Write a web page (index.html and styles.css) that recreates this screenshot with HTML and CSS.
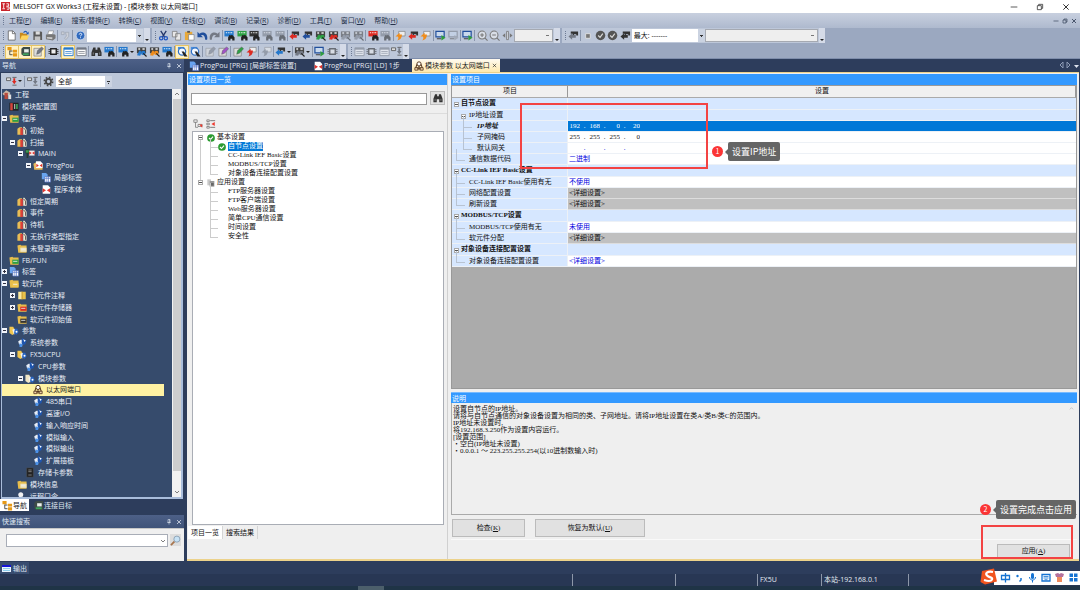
FILE: index.html
```html
<!DOCTYPE html>
<html lang="zh-CN">
<head>
<meta charset="utf-8">
<title>MELSOFT GX Works3 (工程未设置) - [模块参数 以太网端口]</title>
<link rel="stylesheet" href="styles.css">
</head>
<body>
<svg class="defs" aria-hidden="true">
  <symbol id="new" viewBox="0 0 12 12"><path d="M2.500 1h5l2.500 2.500V11H2.500z" fill="#fff" stroke="#555" stroke-width=".8"/><path d="M7 1v3h3" fill="none" stroke="#555" stroke-width=".8"/></symbol>
  <symbol id="open" viewBox="0 0 12 12"><path d="M1 3h3l1 1h4v6H1z" fill="#c98a1c"/><path d="M3 6h8l-2 4.500H1z" fill="#ffd45c"/><path d="M5 3c1-2 3-2 4 0" fill="none" stroke="#1d57b5" stroke-width="1.200"/><path d="M10.500 1.500v3h-3z" fill="#1d57b5"/></symbol>
  <symbol id="save" viewBox="0 0 12 12"><path d="M1.500 1.500H10l1 1V11H1.500z" fill="#5a5a5a"/><path d="M4 1.500h4.500V5H4z" fill="#ddd"/><path d="M3 7h6v4H3z" fill="#c4c4c4"/></symbol>
  <symbol id="print" viewBox="0 0 12 12"><path d="M4 1h5.500L8 5H3z" fill="#fff" stroke="#777" stroke-width=".6"/><path d="M1 5l9-.5 1.500 1V9l-3 2.500L1 10z" fill="#777"/><path d="M2 7.500l6 .5v2l-6-.7z" fill="#ccc"/></symbol>
  <symbol id="copyg" viewBox="0 0 12 12"><path d="M1.500 2h3v3h-3zM6 2.500h3.500V7l-3 3.500L5 9l2-2.500z" fill="#ccd0d8" stroke="#98a0ae" stroke-width=".7"/></symbol>
  <symbol id="help" viewBox="0 0 12 12"><circle cx="6" cy="6" r="4.700" fill="#2f69bd" stroke="#d7e5f8" stroke-width=".7"/><path d="M4.600 5c0-2 3-1.700 2.800-.2C7.300 5.700 6 5.800 6 7M6 8v.9" fill="none" stroke="#fff" stroke-width="1"/></symbol>
  <symbol id="cut" viewBox="0 0 12 12"><path d="M3 1l4.500 7M9 1L4.500 8" stroke="#25376a" stroke-width="1.400"/><circle cx="3.500" cy="9" r="1.800" fill="none" stroke="#2458c0" stroke-width="1.400"/><circle cx="8.500" cy="9" r="1.800" fill="none" stroke="#2458c0" stroke-width="1.400"/></symbol>
  <symbol id="copy" viewBox="0 0 12 12"><path d="M1.500 1.500h5v6h-5zM5 4h5.500v7H5z" fill="#e8e8e8" stroke="#777" stroke-width=".8"/></symbol>
  <symbol id="paste" viewBox="0 0 12 12"><path d="M1 2h8v9H1z" fill="#e8a93a"/><path d="M3.500 1h3v2h-3z" fill="#555"/><path d="M5 5h6v6H5z" fill="#fff" stroke="#777" stroke-width=".7"/></symbol>
  <symbol id="undo" viewBox="0 0 12 12"><path d="M.5 2v6h6L4.500 6c2-1.200 4 0 4.500 4.500h2C12.500 4 7 1 2.600 4z" fill="var(--a)"/></symbol>
  <symbol id="find" viewBox="0 0 12 12"><path d="M.5 1h10v6H.5z" fill="var(--a)"/><path d="M2 3h1.500M4.500 3H6M7 3h2" stroke="#fff" stroke-width="1"/><path d="M4.500 11.500V8l1.500-2.500h1l.5 1 .5-1h1L11.500 8v3.500H9V9.500H7v2z" fill="#222"/></symbol>
  <symbol id="lad" viewBox="0 0 12 12"><path d="M3 1.500h8V6H9V4.500H6.500V6H5V4H3z" fill="#333"/><path d="M.5 7l4-3.500V5.500h4v3h-4v2z" fill="var(--a)"/></symbol>
  <symbol id="ladm" viewBox="0 0 12 12"><path d="M1 1.500h10V8H1z" fill="#444"/><path d="M2.500 2.500h2V4h-2zM7 2.500h2.500V4H7z" fill="#eee"/><path d="M1 10l3-5.500 2.500 2-2 4z" fill="var(--a)"/><circle cx="8" cy="7.500" r="2.400" fill="var(--a)"/><path d="M8 8l3.500 3.500" stroke="#222" stroke-width="1.300"/></symbol>
  <symbol id="swap" viewBox="0 0 12 12"><path d="M4 1.500h7V6.500H4z" fill="#eee" stroke="#777" stroke-width=".7"/><path d="M.5 7l4.500-4v2h2.500c0 3-1 5.500-5 6.500 1.500-2 1.500-3.500.5-4.500z" fill="var(--a)"/></symbol>
  <symbol id="mon" viewBox="0 0 12 12"><path d="M1 1.500h9v6H1z" fill="#c9d9ed" stroke="var(--a)" stroke-width="1.300"/><path d="M2 9.500h5" stroke="#555" stroke-width="1.300"/><path d="M7 5.500l4.500 3L7 11.500z" fill="var(--b)"/></symbol>
  <symbol id="plus" viewBox="0 0 12 12"><circle cx="5.500" cy="5.500" r="4.300" fill="#d8dde6" stroke="#777" stroke-width="1.100"/><path d="M3.500 5.500h4M5.500 3.500v4M8.500 8.500l3 3" stroke="#777" stroke-width="1.200"/></symbol>
  <symbol id="minus" viewBox="0 0 12 12"><circle cx="5.500" cy="5.500" r="4.300" fill="#d8dde6" stroke="#777" stroke-width="1.100"/><path d="M3.500 5.500h4M8.500 8.500l3 3" stroke="#777" stroke-width="1.200"/></symbol>
  <symbol id="fit" viewBox="0 0 12 12"><path d="M5 1.500h2v9H5z" fill="#d8dde6" stroke="#777" stroke-width=".9"/><path d="M.5 6L3.500 3.500v5zM11.500 6l-3-2.500v5z" fill="#777"/></symbol>
  <symbol id="ok" viewBox="0 0 12 12"><circle cx="6" cy="6" r="5.200" fill="#555"/><path d="M3.500 6l2 2 3-4" fill="none" stroke="#ddd" stroke-width="1.300"/></symbol>
  <symbol id="stop" viewBox="0 0 12 12"><path d="M4 4h5v5H4z" fill="#777" stroke="#eee" stroke-width=".8"/></symbol>
  <symbol id="tree" viewBox="0 0 12 12"><path d="M.5 1H5v3.500H.5zM6.500 4H11v3H6.500zM6.500 8H11v3.500H6.500z" fill="#e79a17"/><path d="M3 5v4.500h3M3 5.500h3" fill="none" stroke="#333" stroke-width=".9"/></symbol>
  <symbol id="conn" viewBox="0 0 12 12"><path d="M1.500 3l2-2H11v10H4L1.500 9z" fill="#3d4b47"/><path d="M4.500 3.500h5V7h-5z" fill="#e9efeb"/><path d="M3 9h6.500" stroke="#3fa65d" stroke-width="2"/></symbol>
  <symbol id="chip" viewBox="0 0 12 12"><path d="M3 3h6v6H3z" fill="#eee" stroke="#222" stroke-width="1.500"/><path d="M.5 4H3M.5 8H3M9 4h2.500M9 8h2.500M.5 6H3M9 6h2.500" stroke="#222" stroke-width=".9"/></symbol>
  <symbol id="list" viewBox="0 0 12 12"><path d="M1 2h10v8.500H1z" fill="#fff" stroke="var(--a)"/><path d="M1 3h10" stroke="var(--a)" stroke-width="2"/><path d="M2.500 6h7M2.500 8h7" stroke="var(--a)" stroke-width=".8"/></symbol>
  <symbol id="bino" viewBox="0 0 12 12"><path d="M2.500 1.500H5V4h2V1.500h2.500L11.500 7v4h-4V7.500h-3V11h-4V7z" fill="#333"/><path d="M2.500 7v2.500M9.500 7v2.500" stroke="#999" stroke-width=".8"/></symbol>
  <symbol id="watch" viewBox="0 0 12 12"><path d="M1 1h7v3H1z" fill="#4a90df"/><circle cx="5.500" cy="6" r="4" fill="#f5f9ff" stroke="#2d6fc4" stroke-width="1.300"/><path d="M5 6h2.500l4 5.500H8z" fill="#222"/></symbol>
  <symbol id="pen" viewBox="0 0 12 12"><path d="M1 2.500h8V11H1z" fill="#ddd" stroke="#777" stroke-width=".7"/><path d="M4 9l1-4 4.500-4 2 2L7 8z" fill="var(--a)" stroke="#555" stroke-width=".5"/></symbol>
  <symbol id="gear" viewBox="0 0 12 12"><circle cx="6" cy="6" r="4.500" fill="none" stroke="#444" stroke-width="1.800" stroke-dasharray="1.800 1.700"/><circle cx="6" cy="6" r="2.800" fill="none" stroke="#444" stroke-width="2"/></symbol>
  <symbol id="nodes" viewBox="0 0 12 12"><path d="M.5 2h4.500v3H.5zM7 1.500h4.500M7 10h4.500" fill="#ddd" stroke="#555" stroke-width=".9"/><path d="M8 2.500h2v3h1.500L9 9 6.500 5.500H8z" fill="var(--a)"/></symbol>
  <symbol id="expand" viewBox="0 0 12 12"><path d="M1 1h4v3H1zM6 6.500h5V9H6z" fill="#eee" stroke="#666" stroke-width=".8"/><path d="M3 4v6h3" fill="none" stroke="#666" stroke-width=".8"/><path d="M7.500 6.500l3.500 4V6.500z" fill="#ee3a2f"/></symbol>
  <symbol id="collapse" viewBox="0 0 12 12"><path d="M1 1h3v2H1zM1 5h3v2H1zM1 9h3v2H1z" fill="#eee" stroke="#666" stroke-width=".8"/><path d="M5 2h6M5 10h6" stroke="#666"/><path d="M6.500 6l4-2.500v5z" fill="#ee3a2f"/></symbol>
  <symbol id="proj" viewBox="0 0 12 12"><path d="M.5 5l4.500-4 5 3-1 3H2z" fill="#c9b8a8"/><path d="M3 4h4v7.500H3z" fill="#b94b3d"/><path d="M7.500 6H11v5.500H7.500z" fill="#ddd"/></symbol>
  <symbol id="mod" viewBox="0 0 12 12"><path d="M.5 1.500h11v9.500H.5z" fill="#222"/><path d="M1.500 2h3v8.500h-3z" fill="#d4453d"/><path d="M6 3h1.500v6H6z" fill="#aaa"/><path d="M8.500 3h2v6h-2z" fill="#3da35a"/></symbol>
  <symbol id="fold" viewBox="0 0 12 12"><path d="M.5 2.500l3.500-1 1 1h6.500V11H1.500z" fill="#e7bd4c"/><path d="M4 5h7.500v5H4z" fill="var(--a)"/><path d="M5 7h5" stroke="#eee"/></symbol>
  <symbol id="task" viewBox="0 0 12 12"><path d="M.5 4l2.500-2h3v9H.5z" fill="#e9bd55"/><path d="M4 3h3v8.500H4z" fill="#dd4139"/><path d="M7.500 1.500H9L11.500 5v6h-4z" fill="#f0e7d0"/><path d="M8 3l2.200 2.500V10" fill="none" stroke="#333" stroke-width=".9"/></symbol>
  <symbol id="pou" viewBox="0 0 12 12"><path d="M2 1h6.500L11 3.500V11H2z" fill="#fff"/><path d="M2 4.500L6 7 2 9.500zM11 4.500L7 7l4 2.500z" fill="#e1342d"/></symbol>
  <symbol id="poufold" viewBox="0 0 12 12"><path d="M.5 4l3.500-2 7.500 2v7H1.500z" fill="#e7b95c"/><path d="M3.500 1H9l2.500 2.500V9h-8z" fill="#fff"/><path d="M4 4l3 2-3 2zM11 4L8 6l3 2z" fill="#e1342d"/></symbol>
  <symbol id="main" viewBox="0 0 12 12"><path d="M.5 1h5v5H4v5.500H2V6H.5z" fill="#243b34"/><path d="M1 2h3.500v3H1z" fill="#3d9a4e"/><path d="M5 2.500h6.500v6H5z" fill="#f3e9e9"/><path d="M5 3.500l3 2-3 2zM11.500 3.500l-3 2 3 2z" fill="#e1342d"/></symbol>
  <symbol id="label" viewBox="0 0 12 12"><path d="M1 .5h5l2 2V8H1z" fill="#69a4ef"/><path d="M4.500 5h7v6.500h-7z" fill="#fff" stroke="#4566c0" stroke-width=".7"/><path d="M4.500 7h7M7 5v6.500M9 5v6.500" stroke="#4566c0" stroke-width=".7"/></symbol>
  <symbol id="param" viewBox="0 0 12 12"><path d="M1.500 4.500L5 2.500 7 5 6 8.500H2.500z" fill="#e8edf6"/><path d="M6 .5l5.500 3L10 8 7.500 9 5.500 7z" fill="#1e55ae"/><path d="M7.500 2l3 1.500-1.500 2z" fill="#fff"/><path d="M3 7l4 1.500L6 11.500H3z" fill="#4b92ea"/></symbol>
  <symbol id="pfold" viewBox="0 0 12 12"><path d="M.5 1.500H5l1.500 3V10L4 11.500.5 9z" fill="var(--a)"/><path d="M4 5l3-1 1 3-2 4z" fill="#f3f3f3"/><path d="M7 4h3l1.500 4L9 11 6 9.500z" fill="#2865c2"/><circle cx="9" cy="7.500" r="1.200" fill="#fff"/></symbol>
  <symbol id="eth" viewBox="0 0 12 12"><circle cx="6" cy="3.500" r="2.500" fill="#fff" stroke="#5a3b22" stroke-width="1.200"/><path d="M3.500 4L2 8.500h8L8.500 4M6 6v5" fill="none" stroke="#5a3b22" stroke-width="1.300"/><path d="M1 8h3.500v3H1zM7.500 8H11v3H7.500z" fill="#f2d5ab" stroke="#5a3b22"/></symbol>
  <symbol id="card" viewBox="0 0 12 12"><path d="M2 .5h8v11H2z" fill="#222" stroke="#555" stroke-width=".5"/><path d="M4 3h4M4 5h4M4 9h4" stroke="#aaa" stroke-width=".8"/></symbol>
  <symbol id="key" viewBox="0 0 12 12"><circle cx="4.500" cy="4" r="3" fill="#f2f2f2"/><path d="M5 6l6 4-3 1.500-4-4.500z" fill="#aec5d3"/></symbol>
  <symbol id="good" viewBox="0 0 12 12"><circle cx="6" cy="6" r="5.800" fill="#2c9b31"/><path d="M3 6l2.300 2.300L9 4" fill="none" stroke="#fff" stroke-width="1.700"/></symbol>
  <symbol id="pages" viewBox="0 0 12 12"><path d="M.5.500H6v9H.5z" fill="#c9c9c9"/><path d="M4 3h7v8.500H4z" fill="#999"/><path d="M5.500 6H10v4H5.500z" fill="#666"/></symbol>
  <symbol id="note" viewBox="0 0 12 12"><path d="M1.500 1.500h4.500v9H1.500z" fill="#fbeaa0"/><path d="M6 1.500h4.500v9H6z" fill="#e9c24b"/><path d="M6 1v10" stroke="#b98d25"/></symbol>
  <symbol id="pin" viewBox="0 0 12 12"><path d="M4 1h4v6H4zM2.500 7h7M6 7v4M7.200 1v6" fill="none" stroke="#d5ddea" stroke-width="1.200"/></symbol>
  <symbol id="x" viewBox="0 0 12 12"><path d="M2 2l8 8M10 2l-8 8" stroke="currentColor" stroke-width="1.500"/></symbol>
  <symbol id="lens" viewBox="0 0 12 12"><path d="M1 11l4-4" stroke="#a8764f" stroke-width="2"/><circle cx="7.500" cy="4.500" r="3.300" fill="#c7e2f5" stroke="#8aa0b4"/></symbol>
  <symbol id="max" viewBox="0 0 12 12"><path d="M2 4h6v6H2zM4 4V2h6v6H8" fill="none" stroke="currentColor" stroke-width="1.200"/></symbol>
  <symbol id="min" viewBox="0 0 12 12"><path d="M1 6h10" stroke="currentColor" stroke-width="1.200"/></symbol>
  <symbol id="down" viewBox="0 0 12 12"><path d="M2 4l4 4 4-4" fill="none" stroke="#555" stroke-width="1.500"/></symbol>
  <symbol id="up" viewBox="0 0 12 12"><path d="M2 8l4-4 4 4" fill="none" stroke="#555" stroke-width="1.500"/></symbol>
</svg>

<header class="titlebar">
  <svg class="applogo" viewBox="0 0 10 10" aria-hidden="true"><path d="M0 0h10v10H0z" fill="#c9232b"/><path d="M1.500 2h3M3 2v5M1.500 7.500h3M6 2h2.500v2.500H6M6 5.500h3V8H6.500" fill="none" stroke="#fff" stroke-width="1"/></svg>
  <h1>MELSOFT GX Works3 (工程未设置) - [模块参数 以太网端口]</h1>
  <div class="winbtns"><button aria-label="最小化"><svg><use href="#min"/></svg></button><button aria-label="还原"><svg><use href="#max"/></svg></button><button aria-label="关闭"><svg><use href="#x"/></svg></button></div>
</header>

<nav class="menubar">
  <i class="grip"></i>
  <button>工程(<u>P</u>)</button><button>编辑(<u>E</u>)</button><button>搜索/替换(<u>F</u>)</button><button>转换(<u>C</u>)</button><button>视图(<u>V</u>)</button><button>在线(<u>O</u>)</button><button>调试(<u>B</u>)</button><button>记录(<u>R</u>)</button><button>诊断(<u>D</u>)</button><button>工具(<u>T</u>)</button><button>窗口(<u>W</u>)</button><button>帮助(<u>H</u>)</button>
  <div class="childbtns"><button aria-label="最小化子窗口"><svg><use href="#min"/></svg></button><button aria-label="还原子窗口"><svg><use href="#max"/></svg></button><button aria-label="关闭子窗口"><svg><use href="#x"/></svg></button></div>
</nav>

<div class="toolbars">
  <div class="toolrow">
    <div class="bar bar-file">
      <i class="grip"></i>
      <button aria-label="新建"><svg><use href="#new"/></svg></button><button aria-label="打开"><svg><use href="#open"/></svg></button><button aria-label="保存"><svg><use href="#save"/></svg></button><button aria-label="打印"><svg><use href="#print"/></svg></button><i class="sep"></i>
      <button aria-label="粘贴链接"><svg><use href="#copyg"/></svg></button><i class="sep"></i>
      <button aria-label="帮助"><svg><use href="#help"/></svg></button>
      <select class="combo combo-key" aria-label="关键字"><option></option></select><button class="more" aria-label="更多"></button>
    </div>
    <div class="bar bar-edit">
      <i class="grip"></i>
      <button aria-label="剪切"><svg><use href="#cut"/></svg></button><button aria-label="复制"><svg><use href="#copy"/></svg></button><button aria-label="粘贴"><svg><use href="#paste"/></svg></button><button class="navy" aria-label="撤销"><svg><use href="#undo"/></svg></button><button class="gray flip" aria-label="恢复"><svg><use href="#undo"/></svg></button><i class="sep"></i>
      <button class="blue" aria-label="软元件搜索"><svg><use href="#find"/></svg></button><button class="green" aria-label="指令搜索"><svg><use href="#find"/></svg></button><button class="dark" aria-label="触点搜索"><svg><use href="#find"/></svg></button><button class="gray dim" aria-label="向上"><svg><use href="#find"/></svg></button><button class="gray dim" aria-label="向下"><svg><use href="#find"/></svg></button><i class="sep"></i>
      <button class="red" aria-label="写入"><svg><use href="#lad"/></svg></button><button class="navy" aria-label="读取"><svg><use href="#lad"/></svg></button><button class="green" aria-label="监视开始"><svg><use href="#ladm"/></svg></button><button class="red" aria-label="监视停止"><svg><use href="#ladm"/></svg></button><button class="gray dim" aria-label="监视写入"><svg><use href="#ladm"/></svg></button><button class="gray dim" aria-label="监视读取"><svg><use href="#ladm"/></svg></button><i class="sep"></i>
      <button class="red" aria-label="软元件批量"><svg><use href="#find"/></svg></button><button class="gray dim" aria-label="缓冲批量"><svg><use href="#find"/></svg></button><i class="sep"></i>
      <button class="orange" aria-label="转换"><svg><use href="#swap"/></svg></button><button class="red" aria-label="转换运行"><svg><use href="#lad"/></svg></button><button class="orange" aria-label="全部转换"><svg><use href="#swap"/></svg></button><i class="sep"></i>
      <button class="navy" aria-label="模拟开始"><svg><use href="#mon"/></svg></button><button class="gray dim" aria-label="模拟停止"><svg><use href="#mon"/></svg></button><i class="sep"></i>
      <button class="navy" aria-label="系统模拟"><svg><use href="#mon"/></svg></button><i class="sep"></i>
      <button aria-label="放大"><svg><use href="#plus"/></svg></button><button aria-label="缩小"><svg><use href="#minus"/></svg></button><button aria-label="适合"><svg><use href="#fit"/></svg></button>
      <select class="combo combo-zoom off" aria-label="缩放"><option></option></select><button class="more" aria-label="更多"></button>
    </div>
    <div class="bar bar-run">
      <i class="grip"></i>
      <button class="gray" aria-label="梯形图"><svg><use href="#lad"/></svg></button><i class="sep"></i>
      <button aria-label="停止"><svg><use href="#stop"/></svg></button><button aria-label="确认"><svg><use href="#ok"/></svg></button><button aria-label="全部确认"><svg><use href="#ok"/></svg></button><button class="dark" aria-label="步进"><svg><use href="#lad"/></svg></button>
      <select class="combo combo-max" aria-label="最大"><option>最大: -------</option></select>
      <select class="combo combo-unit off" aria-label="对象"><option></option></select><button class="more" aria-label="更多"></button>
    </div>
  </div>
  <div class="toolrow">
    <div class="bar bar-view">
      <i class="grip"></i>
      <button class="on" aria-label="导航窗口"><svg><use href="#tree"/></svg></button><button class="on" aria-label="连接目标"><svg><use href="#conn"/></svg></button><button class="on gray" aria-label="部件选择"><svg><use href="#pen"/></svg></button><i class="sep"></i>
      <button aria-label="模块"><svg><use href="#chip"/></svg></button><i class="sep"></i>
      <button class="on blue" aria-label="输出"><svg><use href="#list"/></svg></button><button class="gray" aria-label="进度"><svg><use href="#list"/></svg></button><i class="sep"></i>
      <button aria-label="搜索"><svg><use href="#bino"/></svg></button><button class="blue" aria-label="交叉参照"><svg><use href="#find"/></svg></button><i class="sep"></i>
      <button class="blue drop" aria-label="软元件使用"><svg><use href="#find"/></svg></button><button class="blue" aria-label="注释"><svg><use href="#ladm"/></svg></button><button class="orange" aria-label="数据"><svg><use href="#ladm"/></svg></button><button class="blue" aria-label="监看"><svg><use href="#find"/></svg></button><i class="sep"></i>
      <button class="on" aria-label="快速搜索"><svg><use href="#watch"/></svg></button><button aria-label="搜索结果"><svg><use href="#watch"/></svg></button><i class="sep"></i>
      <button class="gray dim" aria-label="编辑"><svg><use href="#pen"/></svg></button><button class="purple" aria-label="书签"><svg><use href="#pen"/></svg></button><i class="sep"></i>
      <button class="green" aria-label="编写"><svg><use href="#pen"/></svg></button><button class="red" aria-label="校验"><svg><use href="#swap"/></svg></button><i class="sep"></i>
      <button class="gray dim" aria-label="比较"><svg><use href="#swap"/></svg></button><i class="sep"></i>
      <button class="blue drop" aria-label="监视"><svg><use href="#lad"/></svg></button><i class="sep"></i>
      <button class="gray drop" aria-label="调试"><svg><use href="#ladm"/></svg></button><i class="sep"></i>
      <button class="navy" aria-label="窗口"><svg><use href="#mon"/></svg></button><button class="gray dim" aria-label="网络"><svg><use href="#chip"/></svg></button><button class="more" aria-label="更多"></button>
    </div>
    <div class="bar bar-misc">
      <i class="grip"></i>
      <button class="gray dim" aria-label="表"><svg><use href="#list"/></svg></button><button class="dim" aria-label="单元"><svg><use href="#chip"/></svg></button><button class="gray dim" aria-label="列表"><svg><use href="#list"/></svg></button><button class="gray" aria-label="连线"><svg><use href="#nodes"/></svg></button><button class="more" aria-label="更多"></button>
    </div>
  </div>
</div>

<main class="work">
  <aside class="side">
    <div class="dockhead"><h2>导航</h2><svg><use href="#pin"/></svg><svg><use href="#x"/></svg></div>
    <div class="navtools">
      <button class="red drop" aria-label="展开"><svg><use href="#nodes"/></svg></button><i class="sep"></i><button class="gray" aria-label="折叠"><svg><use href="#nodes"/></svg></button><i class="sep"></i><button aria-label="设置"><svg><use href="#gear"/></svg></button>
      <select class="combo combo-all" aria-label="筛选"><option>全部</option></select>
    </div>
    <div class="navbody">
      <ul class="navtree">
        <li class="root"><svg><use href="#proj"/></svg>工程</li>
        <li class="l1"><b></b><svg><use href="#mod"/></svg>模块配置图</li>
        <li class="l1"><button class="tg" aria-label="折叠"></button><svg class="green"><use href="#fold"/></svg>程序</li>
        <li class="l2"><b></b><svg><use href="#task"/></svg>初始</li>
        <li class="l2"><button class="tg" aria-label="折叠"></button><svg><use href="#task"/></svg>扫描</li>
        <li class="l3"><button class="tg" aria-label="折叠"></button><svg><use href="#main"/></svg>MAIN</li>
        <li class="l4"><button class="tg" aria-label="折叠"></button><svg><use href="#poufold"/></svg>ProgPou</li>
        <li class="l5"><b></b><svg><use href="#label"/></svg>局部标签</li>
        <li class="l5"><b></b><svg><use href="#pou"/></svg>程序本体</li>
        <li class="l2"><b></b><svg><use href="#task"/></svg>恒定周期</li>
        <li class="l2"><b></b><svg><use href="#task"/></svg>事件</li>
        <li class="l2"><b></b><svg><use href="#task"/></svg>待机</li>
        <li class="l2"><b></b><svg><use href="#task"/></svg>无执行类型指定</li>
        <li class="l2"><b></b><svg class="cream"><use href="#fold"/></svg>未登录程序</li>
        <li class="l1"><b></b><svg class="green"><use href="#fold"/></svg>FB/FUN</li>
        <li class="l1"><button class="tg plus" aria-label="展开"></button><svg><use href="#label"/></svg>标签</li>
        <li class="l1"><button class="tg" aria-label="折叠"></button><svg class="yellow"><use href="#fold"/></svg>软元件</li>
        <li class="l2"><button class="tg plus" aria-label="展开"></button><svg><use href="#note"/></svg>软元件注释</li>
        <li class="l2"><button class="tg plus" aria-label="展开"></button><svg class="red"><use href="#fold"/></svg>软元件存储器</li>
        <li class="l2"><b></b><svg class="dark"><use href="#fold"/></svg>软元件初始值</li>
        <li class="l1"><button class="tg" aria-label="折叠"></button><svg class="yellow"><use href="#pfold"/></svg>参数</li>
        <li class="l2"><b></b><svg><use href="#param"/></svg>系统参数</li>
        <li class="l2"><button class="tg" aria-label="折叠"></button><svg class="yellow"><use href="#pfold"/></svg>FX5UCPU</li>
        <li class="l3"><b></b><svg><use href="#param"/></svg>CPU参数</li>
        <li class="l3"><button class="tg" aria-label="折叠"></button><svg class="cream"><use href="#pfold"/></svg>模块参数</li>
        <li class="l4 sel"><b></b><svg><use href="#eth"/></svg>以太网端口</li>
        <li class="l4"><b></b><svg><use href="#param"/></svg>485串口</li>
        <li class="l4"><b></b><svg><use href="#param"/></svg>高速I/O</li>
        <li class="l4"><b></b><svg><use href="#param"/></svg>输入响应时间</li>
        <li class="l4"><b></b><svg><use href="#param"/></svg>模拟输入</li>
        <li class="l4"><b></b><svg><use href="#param"/></svg>模拟输出</li>
        <li class="l4"><b></b><svg><use href="#param"/></svg>扩展插板</li>
        <li class="l3"><b></b><svg><use href="#card"/></svg>存储卡参数</li>
        <li class="l2"><b></b><svg class="cream"><use href="#fold"/></svg>模块信息</li>
        <li class="l2"><b></b><svg><use href="#key"/></svg>远程口令</li>
      </ul>
      <div class="vscroll"><svg><use href="#up"/></svg><i></i><svg><use href="#down"/></svg></div>
    </div>
    <div class="sidetabs"><button class="cur"><svg><use href="#tree"/></svg>导航</button><button><svg><use href="#conn"/></svg>连接目标</button></div>
    <div class="dockhead quick"><h2>快速搜索</h2><svg><use href="#pin"/></svg><svg><use href="#x"/></svg></div>
    <div class="quickbody"><div class="quickbox"><input aria-label="快速搜索"><svg><use href="#down"/></svg></div><button aria-label="搜索"><svg><use href="#lens"/></svg></button></div>
  </aside>

  <section class="docs">
    <div class="doctabs">
      <button class="t1"><svg><use href="#label"/></svg><span>ProgPou [PRG] [局部标签设置]</span></button>
      <button class="t2"><svg><use href="#pou"/></svg><span>ProgPou [PRG] [LD] 1步</span></button>
      <button class="t3 cur"><svg><use href="#eth"/></svg><span>模块参数 以太网端口</span><svg class="tiny"><use href="#x"/></svg></button>
      <svg class="tabnav" viewBox="0 0 20 8" aria-hidden="true"><path d="M4 1L1 4l3 3zM8 1l3 3-3 3z" fill="none" stroke="#8d9bb5"/><path d="M15 4h5l-2.500 3z" fill="#dde3ee"/></svg>
    </div>
    <div class="doc">
      <section class="items">
        <h3>设置项目一览</h3>
        <div class="itemsearch"><input aria-label="搜索设置项目"><button aria-label="搜索"><svg><use href="#bino"/></svg></button></div>
        <div class="itemtools"><button aria-label="展开全部"><svg><use href="#expand"/></svg></button><button aria-label="折叠全部"><svg><use href="#collapse"/></svg></button></div>
        <div class="itembox">
          <ul class="itemtree">
            <li><button class="pm" aria-label="折叠"></button><svg class="lead"><use href="#good"/></svg>基本设置
              <ul>
                <li class="marked"><svg><use href="#good"/></svg><mark>自节点设置</mark></li>
                <li>CC-Link IEF Basic设置</li>
                <li>MODBUS/TCP设置</li>
                <li>对象设备连接配置设置</li>
              </ul>
            </li>
            <li><button class="pm" aria-label="折叠"></button><svg class="lead"><use href="#pages"/></svg>应用设置
              <ul>
                <li>FTP服务器设置</li>
                <li>FTP客户端设置</li>
                <li>Web服务器设置</li>
                <li>简单CPU通信设置</li>
                <li>时间设置</li>
                <li>安全性</li>
              </ul>
            </li>
          </ul>
        </div>
        <div class="itemtabs"><button class="cur">项目一览</button><button>搜索结果</button></div>
      </section>

      <section class="detail">
        <h3>设置项目</h3>
        <div class="gridbox">
          <table>
            <colgroup><col class="c1"><col></colgroup>
            <thead><tr><th>项目</th><th>设置</th></tr></thead>
            <tbody>
              <tr class="cat"><th><button class="pm" aria-label="折叠"></button>自节点设置</th><td></td></tr>
              <tr class="head"><th class="d1"><button class="pm" aria-label="折叠"></button>IP地址设置</th><td></td></tr>
              <tr class="picked"><th class="d2">IP地址</th><td><div class="ip"><input value="192" aria-label="IP地址 1"><i>.</i><input value="168" aria-label="IP地址 2"><i>.</i><input value="0" aria-label="IP地址 3"><i>.</i><input value="20" aria-label="IP地址 4"></div></td></tr>
              <tr><th class="d2">子网掩码</th><td><div class="ip black"><input value="255" aria-label="子网掩码 1"><i>.</i><input value="255" aria-label="子网掩码 2"><i>.</i><input value="255" aria-label="子网掩码 3"><i>.</i><input value="0" aria-label="子网掩码 4"></div></td></tr>
              <tr><th class="d2">默认网关</th><td><div class="ip"><input aria-label="默认网关 1"><i>.</i><input aria-label="默认网关 2"><i>.</i><input aria-label="默认网关 3"><i>.</i><input aria-label="默认网关 4"></div></td></tr>
              <tr><th class="d1 ln">通信数据代码</th><td>二进制</td></tr>
              <tr class="cat"><th><button class="pm" aria-label="折叠"></button>CC-Link IEF Basic设置</th><td></td></tr>
              <tr><th class="d1 ln">CC-Link IEF Basic使用有无</th><td>不使用</td></tr>
              <tr class="off"><th class="d1 ln">网络配置设置</th><td>&lt;详细设置&gt;</td></tr>
              <tr class="off"><th class="d1 ln">刷新设置</th><td>&lt;详细设置&gt;</td></tr>
              <tr class="cat"><th><button class="pm" aria-label="折叠"></button>MODBUS/TCP设置</th><td></td></tr>
              <tr><th class="d1 ln">MODBUS/TCP使用有无</th><td>未使用</td></tr>
              <tr class="off"><th class="d1 ln">软元件分配</th><td>&lt;详细设置&gt;</td></tr>
              <tr class="cat"><th><button class="pm" aria-label="折叠"></button>对象设备连接配置设置</th><td></td></tr>
              <tr><th class="d1 ln">对象设备连接配置设置</th><td>&lt;详细设置&gt;</td></tr>
            </tbody>
          </table>
          <div class="note note1"></div>
          <div class="callout call1"><b>1</b><span>设置IP地址</span></div>
        </div>
        <h3 class="desc-title">说明</h3>
        <div class="desc">
          <p>设置自节点的IP地址。</p>
          <p>请将与自节点通信的对象设备设置为相同的类、子网地址。请将IP地址设置在类A/类B/类C的范围内。</p>
          <p>IP地址未设置时,</p>
          <p>将192.168.3.250作为设置内容运行。</p>
          <p>[设置范围]</p>
          <p>・空白(IP地址未设置)</p>
          <p>・0.0.0.1 ～ 223.255.255.254(以10进制数输入时)</p>
          <svg class="du"><use href="#up"/></svg>
        </div>
        <div class="actions"><button class="check">检查(<u>K</u>)</button><button class="reset">恢复为默认(<u>U</u>)</button></div>
        <div class="apply"><button>应用(<u>A</u>)</button>
          <div class="note note2"></div>
          <div class="callout call2"><b>2</b><span>设置完成点击应用</span></div>
        </div>
      </section>
    </div>
  </section>
</main>

<div class="output"><button><svg viewBox="0 0 9 7" class="outicon" aria-hidden="true"><path d="M0 0h9v7H0z" fill="#e9f4ff"/><path d="M0 0h9v2H0z" fill="#1414d8"/><path d="M1 3.500h7M1 5.500h7" stroke="#76c7e8" stroke-width=".8"/></svg>输出</button></div>
<footer class="status"><span></span><span></span><span></span><span>FX5U</span><span>本站-192.168.0.1</span><span></span></footer>
<div class="strip"><i></i></div>
<div class="ime">
  <svg viewBox="0 0 100 18" role="img" aria-label="输入法">
    <path d="M14 3h86v14H14z" fill="#fff"/>
    <path d="M2 3l12-2.500 3 13L5 16.500.5 14z" fill="#f0541e"/><path d="M13 4C8 3 4.500 5 7 7.500s6 1.500 5 4c-1 2-5 1.500-8 .5" fill="none" stroke="#fff" stroke-width="2.200"/>
    <path d="M21.500 7.500h8v4h-8zM25.500 5v9.500" fill="none" stroke="#1673d2" stroke-width="1.300"/>
    <circle cx="37.500" cy="8" r="1.200" fill="#1673d2"/><path d="M41 10v2l-1.500 1.500" fill="none" stroke="#1673d2" stroke-width="1.500"/>
    <rect x="51" y="5" width="3" height="6" rx="1.500" fill="#1673d2"/><path d="M49.500 9c0 4 6 4 6 0M52.500 12v2.500" fill="none" stroke="#1673d2"/>
    <path d="M62 6.500h8v6.500h-8z" fill="none" stroke="#1673d2" stroke-width="1.300"/><path d="M63.500 8.500h5M63.500 10h5M64.500 11.700h3" stroke="#1673d2" stroke-width=".8"/>
    <path d="M75 6l3-1 1.500 1L81 5l3 1-1 3h-1v5h-5V9h-1z" fill="#b4719d"/><path d="M77 9h5v5h-5z" fill="#f08a5d"/>
    <path d="M89.500 5.500H93V9h-3.500zM94 5.500h3.500V9H94zM89.500 10H93v3.500h-3.500zM94 10h3.500v3.500H94z" fill="#1673d2"/>
  </svg>
</div>
</body>
</html>
```
FILE: styles.css
```css
* { box-sizing: border-box; }
body {
  margin: 0;
  height: 100vh;
  display: flex;
  flex-direction: column;
  overflow: hidden;
  position: relative;
  background: #2d3d5c;
  color: #111;
  font: 7px/9px "Open Sans", "Noto Sans CJK SC", sans-serif;
}
.defs { position: absolute; width: 0; height: 0; }
button, input, select { font: inherit; color: inherit; padding: 0; margin: 0; border: 0; background: none; border-radius: 0; }
button { display: flex; align-items: center; justify-content: center; white-space: nowrap; }
input { min-width: 0; outline: 0; }
h1, h2, h3, p, ul { margin: 0; padding: 0; font-size: inherit; font-weight: 400; }
ul { list-style: none; }
svg { display: block; flex: none; width: 11px; height: 11px; }
i, b { flex: none; font-style: normal; }

.blue { --a: #2478cc; }
.navy { --a: #214f9c; --b: #2f9d3e; }
.green { --a: #2da044; }
.red { --a: #dc2b23; }
.orange { --a: #ef8c1c; }
.purple { --a: #a252c8; }
.dark { --a: #333; }
.gray { --a: #737985; --b: #8d939e; }
.cream { --a: #efe5c5; }
.yellow { --a: #f0c64f; }
.dim { opacity: .55; }
.flip svg { transform: scaleX(-1); }

.titlebar { flex: none; height: 13px; display: flex; align-items: center; gap: 3px; padding-left: 1px; background: #fff; line-height: 12px; }
.titlebar h1 { font-family: "Noto Sans", "Noto Sans CJK SC", sans-serif; }
.applogo { width: 9px; height: 9px; }
.winbtns { margin-left: auto; display: flex; gap: 18px; padding-right: 10px; color: #333; }
.winbtns svg { width: 8px; height: 8px; }
.menubar { flex: none; height: 15px; display: flex; align-items: center; gap: 9px; padding-left: 3px; background: linear-gradient(#c8d0df, #aeb9ce); color: #26324a; }
.menubar .grip { margin-right: -5px; }
.childbtns { margin-left: auto; display: flex; gap: 3px; padding-right: 3px; }
.childbtns svg { width: 6px; height: 6px; }
.grip { width: 2px; height: 9px; border-left: 1px dotted #6d7b95; }
.toolbars { flex: none; height: 31px; display: flex; flex-direction: column; gap: 1px; background: #9ba8c0; border-bottom: 1px solid #7e8dab; }
.toolrow { flex: 1; display: flex; gap: 2px; }
.bar { display: flex; align-items: center; justify-content: space-between; padding-left: 3px; background: #bdc7d9; }
.bar-file { width: 150px; }
.bar-edit { width: 408px; }
.bar-run { width: 263px; }
.bar-view { width: 346px; }
.bar-misc { width: 61px; }
.sep { width: 1px; height: 11px; background: #8995ab; }
.bar > button { width: 12px; height: 12px; position: relative; }
.bar > .on { background: #fff1c4; outline: 1px solid #e5c365; }
.bar > .drop { width: 16px; justify-content: flex-start; }
.drop::after { content: ""; border: 2px solid transparent; border-top-color: #222; border-bottom: 0; margin-left: 1px; }
.bar > .more { width: 6px; height: 15px; background: #d5dbe8; align-items: flex-end; padding-bottom: 2px; }
.more::after { content: ""; border: 2px solid transparent; border-top-color: #222; border-bottom: 0; }
.combo {
  appearance: none;
  height: 13px;
  padding-left: 2px;
  background: linear-gradient(#333, #333) right 2px center / 3px 1px no-repeat, linear-gradient(#333, #333) right 3px top 7px / 1px 1px no-repeat, linear-gradient(#cbd3e1, #cbd3e1) right / 7px 100% no-repeat, #fff;
}
.combo.off { border: 1px solid #a5a9b1; background: linear-gradient(#777, #777) right 3px center / 3px 1px no-repeat, #eee; }
.combo-key { width: 56px; }
.combo-zoom { width: 39px; }
.combo-max { width: 73px; }
.combo-unit { width: 113px; }

.work { flex: 1; min-height: 0; display: flex; gap: 3px; }
.side { width: 184px; flex: none; display: flex; flex-direction: column; min-height: 0; }
.dockhead { flex: none; height: 13px; display: flex; align-items: center; gap: 4px; padding: 0 2px; background: linear-gradient(#4d6087, #3f5379); color: #dfe5f0; }
.dockhead h2 { flex: 1; }
.dockhead svg { width: 6px; height: 6px; }
.navtools { flex: none; height: 16px; display: flex; align-items: center; gap: 2px; padding-left: 5px; margin: 1px 1px 0; background: #bcc7d9; }
.navtools .drop { width: 16px; }
.combo-all { width: 56px; height: 11px; }
.navbody { flex: 1; min-height: 0; display: flex; margin: 0 1px; border: solid #a9bddb; border-width: 0 2px 2px 1px; background: #364b6c; }
.navtree { flex: 1; display: grid; grid-auto-rows: 1fr; margin-bottom: -5px; clip-path: inset(0 0 5px 0); color: #e9eef7; }
.navtree li { display: flex; align-items: center; min-height: 0; white-space: nowrap; }
.navtree svg { width: 10px; margin-right: 3px; }
.navtree b { width: 7px; }
.l2 { padding-left: 8px; }
.l3 { padding-left: 16px; }
.l4 { padding-left: 24px; }
.l5 { padding-left: 32px; }
.navtree .sel { background: #fff2a3; color: #222; margin-right: 8px; }
.tg { flex: none; width: 5px; height: 5px; margin-right: 2px; background: linear-gradient(#334, #334) center / 3px 1px no-repeat, #f1f4fa; }
.tg.plus { background: linear-gradient(#334, #334) center / 3px 1px no-repeat, linear-gradient(#334, #334) center / 1px 3px no-repeat, #f1f4fa; }
.vscroll { width: 9px; display: flex; flex-direction: column; align-items: center; background: #f2f2f2; }
.vscroll svg { width: 6px; height: 10px; }
.vscroll i { width: 8px; flex: .96; background: #cdcdcd; }
.vscroll svg:last-child { margin-top: auto; }
.sidetabs { flex: none; height: 16px; display: flex; align-items: flex-start; gap: 2px; color: #dfe5f0; }
.sidetabs button { height: 12px; padding: 0 2px; }
.sidetabs .cur { background: #fff; color: #222; }
.quickbody { flex: none; height: 33px; display: flex; align-items: flex-start; gap: 2px; padding: 5px 3px 0 6px; margin: 0 0 1px; background: #efefef; border-top: 1px solid #c6c6c6; }
.quickbox { flex: 1; height: 13px; display: flex; align-items: center; background: #fff; border: 1px solid #a8adb7; padding-right: 1px; }
.quickbox input { flex: 1; }
.quickbox svg { width: 6px; height: 6px; }
.quickbody button { width: 11px; height: 12px; background: #ddd; }

.docs { flex: 1; min-width: 0; display: flex; flex-direction: column; }
.doctabs { flex: none; height: 13px; display: flex; align-items: stretch; color: #e5eaf3; }
.doctabs button { justify-content: flex-start; gap: 1px; padding-left: 2px; }
.doctabs .t1 { width: 124px; }
.doctabs .t2 { width: 101px; }
.doctabs .t3 { width: 88px; }
.doctabs .cur { background: linear-gradient(#fffaf0, #ffe9ae); color: #222; }
.doctabs svg { width: 10px; height: 10px; }
.doctabs .tiny { width: 5px; height: 5px; margin-left: auto; margin-right: 3px; }
.doctabs .tabnav { width: 20px; height: 8px; margin: 2px 1px 0 auto; }
.doc { flex: 1; min-height: 0; display: flex; gap: 3px; padding: 1px 2px 0 1px; margin: 0 1px 1px 0; background: #efefef; border: solid #ecd28b; border-width: 1px 0 2px; font-family: "Liberation Serif", "Noto Sans CJK SC", sans-serif; }
h3 { flex: none; height: 11px; line-height: 10px; padding-left: 1px; background: #3399ff; color: #fff; font-family: "Noto Sans CJK SC", sans-serif; }
.items { width: 260px; flex: none; display: flex; flex-direction: column; border-right: 1px solid #d0d0d0; }
.itemsearch { flex: none; height: 29px; display: flex; gap: 3px; padding: 6px 2px 0 3px; border-bottom: 1px solid #dcdcdc; }
.itemsearch input { flex: 1; height: 12px; margin-top: 2px; background: #fff; border: 1px solid #999; }
.itemsearch button { width: 15px; height: 14px; background: #e1e1e1; border: 1px solid #bbb; }
.itemsearch button svg { width: 10px; height: 10px; }
.itemtools { flex: none; height: 15px; display: flex; align-items: flex-end; gap: 3px; padding: 0 0 2px 5px; margin-top: 2px; }
.itemtools svg { width: 10px; height: 10px; }
.itembox { flex: 1; min-height: 0; margin: 0 3px 0 4px; padding-top: 1px; background: #fff; border: 1px solid #a9adb5; }
.itemtree { position: relative; }
.itemtree::before { content: ""; position: absolute; left: 7px; top: 5px; height: 44px; border-left: 1px solid #ccc; }
.itemtree li { position: relative; padding-left: 24px; white-space: nowrap; line-height: 9px; }
.itemtree .pm { position: absolute; left: 5px; top: 2px; }
.itemtree .lead { position: absolute; left: 14px; top: 1px; width: 8px; height: 8px; }
.itemtree ul { margin-left: -7px; }
.itemtree ul li { height: 9px; padding-left: 18px; }
.itemtree ul li::before { content: ""; position: absolute; left: 0; top: -4px; width: 7px; height: 9px; border: solid #ccc; border-width: 0 0 1px 1px; }
.itemtree ul svg { position: absolute; left: 8px; top: 1px; width: 8px; height: 8px; }
.itemtree mark { display: inline-block; height: 9px; background: #0078d7; color: #fff; }
.pm { flex: none; width: 5px; height: 5px; border: 1px solid #aaa; background: linear-gradient(#555, #555) center / 3px 1px no-repeat, #fff; }
.itemtabs { flex: none; height: 34px; display: flex; align-items: flex-start; padding-top: 1px; font-family: "Noto Sans CJK SC", sans-serif; }
.itemtabs button { height: 13px; padding: 0 3px; border-right: 1px solid #d5d5d5; }
.itemtabs .cur { background: #fff; }

.detail { flex: 1; min-width: 0; display: flex; flex-direction: column; }
.gridbox { flex: 1; min-height: 0; position: relative; border: 1px solid #999; margin-bottom: 3px; background: #ababab; }
table { width: 100%; table-layout: fixed; border-collapse: separate; border-spacing: 0; line-height: 9px; }
.c1 { width: 116px; }
th, td { padding: 0 0 0 1px; height: 11px; text-align: left; white-space: nowrap; font-weight: 400; border-bottom: 1px solid #edf1f6; }
thead th { height: 12px; text-align: center; background: #f0f0f0; border-right: 1px solid #999; border-bottom-color: #aaa; }
tbody th { background: #d6e7ff; border-right: 1px solid #edf1f6; padding-left: 9px; position: relative; }
tbody td { background: #fff; color: #0000e0; }
.cat th, .cat td { height: 12px; background: #d6e7ff; font-weight: 700; }
.head td { background: #d6e7ff; }
tbody .d1 { padding-left: 17px; }
tbody .d2 { padding-left: 25px; }
th .pm { position: absolute; left: 2px; top: 4px; }
.d1 .pm { left: 9px; }
.ln::before, .d2::before { content: ""; position: absolute; left: 4px; top: -5px; width: 8px; height: 11px; border: solid #b8c3d2; border-width: 0 0 1px 1px; }
.d2::before { left: 11px; }
.picked th { font-weight: 700; font-style: italic; }
.picked td { background: #0078d7; color: #fff; }
.off td { background: #c0c0c0; color: #111; border-bottom-color: #ddd; }
.ip { display: flex; }
.ip input { width: 11px; height: 9px; text-align: right; }
.ip i { width: 9px; text-align: center; }
.black { color: #111; }
.desc-title { border-top: 1px solid #77baff; }
.desc { flex: none; height: 112px; position: relative; padding: 3px 0 0 1px; border: 1px solid #aaa; border-width: 0 0 1px 1px; line-height: 7px; }
.desc p { height: 7px; white-space: nowrap; }
.du { position: absolute; right: 3px; top: 3px; width: 5px; height: 5px; opacity: .4; }
.actions { flex: none; height: 25px; display: flex; gap: 10px; padding: 4px 0 0 1px; border-bottom: 1px solid #f9f9f9; }
.actions button, .apply button { height: 18px; background: #e1e1e1; border: 1px solid #bbb; }
.check { width: 73px; }
.reset { width: 110px; }
.apply { flex: none; height: 19px; display: flex; justify-content: flex-end; padding: 4px 7px 0 0; position: relative; }
.apply button { width: 73px; height: 14px; }

.note { position: absolute; border: 2px solid #f34343; }
.note1 { left: 68px; top: 17px; width: 188px; height: 66px; }
.note2 { right: 4px; bottom: 0; width: 92px; height: 34px; }
.callout { position: absolute; display: flex; align-items: center; gap: 5px; color: #fff; font: 9px/19px "Noto Sans CJK SC", sans-serif; white-space: nowrap; }
.callout b { width: 11px; height: 11px; border-radius: 50%; background: #fb3535; font-size: 7px; line-height: 11px; font-weight: 400; text-align: center; }
.callout span { position: relative; height: 19px; padding: 0 4px; border-radius: 2px; background: #656565; }
.callout span::before { content: ""; position: absolute; left: -3px; top: 7px; border: 3px solid transparent; border-right-color: #656565; border-left: 0; }
.call1 { left: 260px; top: 56px; }
.call2 { right: 1px; bottom: 40px; }

.output { flex: none; height: 12px; display: flex; color: #dfe5f0; }
.output button { gap: 2px; padding: 0 2px; background: #394d70; }
.outicon { width: 9px; height: 7px; }
.status { flex: none; height: 12px; display: grid; grid-template-columns: 1fr 103px 82px 64px 87px 172px; background: #283754; color: #e5eaf3; line-height: 12px; }
.status span { padding-left: 2px; border-left: 1px solid #8d97a9; }
.status span:first-child { border: 0; }
.strip { flex: none; height: 4px; background: #1f3446; display: flex; }
.strip i { width: 26px; margin-left: 358px; background: #4c5f6b; }
.ime { position: absolute; right: 0; bottom: 4px; width: 100px; }
.ime svg { width: 100px; height: 18px; }
```
